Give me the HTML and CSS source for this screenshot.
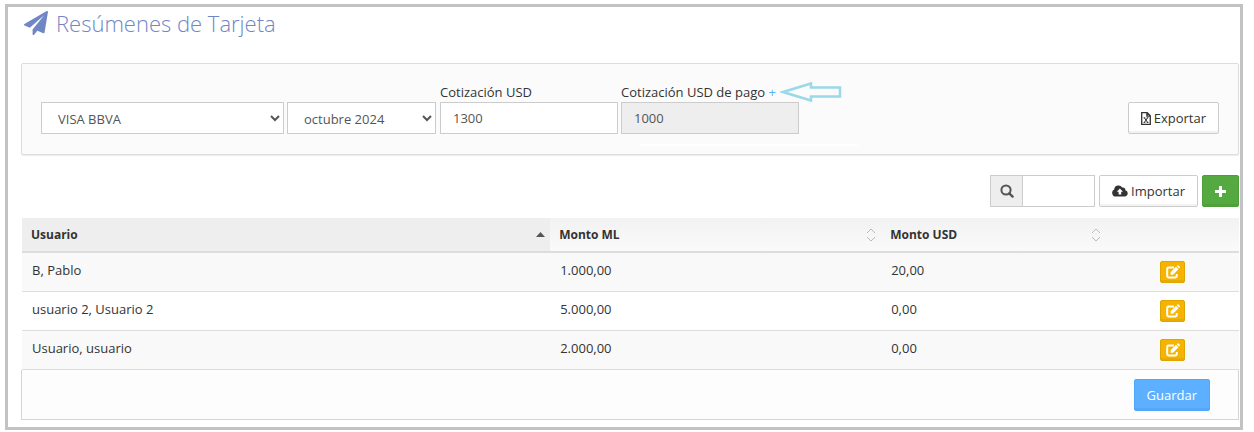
FILE: index.html
```html
<!DOCTYPE html>
<html lang="es">

<head>
    <meta charset="UTF-8">
    <meta name="viewport" content="width=device-width, initial-scale=1.0">
    <title>Resúmenes de Tarjeta</title>
    <link rel="stylesheet" href="styles.css">
</head>

<body>
    <!-- shared icons -->
    <svg class="sprite" aria-hidden="true">
        <symbol id="icon-edit" viewBox="0 0 14 14">
            <path d="M8 2.5H2.6Q1.2 2.5 1.2 3.9V11Q1.2 12.4 2.6 12.4H9.4Q10.8 12.4 10.8 11V9" fill="none" stroke="currentColor" stroke-width="2" />
            <path d="M4.6 9.8V7.2L10 1.8L12.5 4.3L7.1 9.8ZM10.7 1.2L11.5 .4Q12 0 12.5 .4L13.8 1.7Q14.2 2.2 13.8 2.7L13 3.6Z" fill="currentColor" />
        </symbol>
        <symbol id="icon-sort" viewBox="0 0 10 14">
            <path d="M1 5L5 1L9 5M1 9L5 13L9 9" fill="none" stroke="currentColor" />
        </symbol>
    </svg>

    <main class="frame">
        <h1 class="title">
            <svg class="title-icon" viewBox="0 0 1792 1792" aria-hidden="true">
                <path d="M1764 11q33 24 27 64l-256 1536q-5 29-32 45-14 8-31 8-11 0-24-5l-453-185-242 295q-18 23-49 23-13 0-22-4-19-7-30.500-23.500t-11.500-36.500v-349l864-1059-1069 925-395-162q-37-14-40-55-2-40 32-59l1664-960q15-9 32-9 20 0 36 11z" fill="currentColor" />
            </svg>
            Resúmenes de Tarjeta
        </h1>

        <form class="panel">
            <select class="control card-select" aria-label="Tarjeta">
                <option>VISA BBVA</option>
            </select>
            <select class="control month-select" aria-label="Mes">
                <option>octubre 2024</option>
            </select>
            <div class="field">
                <label for="usd">Cotización USD</label>
                <input class="control" type="text" id="usd" value="1300">
            </div>
            <div class="field">
                <div class="field-label">
                    <label for="usdPago">Cotización USD de pago</label>
                    <a class="add-link" href="#">+</a>
                    <svg class="arrow" viewBox="0 0 62 22" aria-hidden="true">
                        <path d="M3 11L31 2.500V6.500H60V15.500H31V19.500Z" fill="none" stroke="currentColor" stroke-width="2.500" />
                    </svg>
                </div>
                <input class="control" type="text" id="usdPago" value="1000" readonly>
            </div>
            <button class="btn export" type="button">
                <svg class="icon-file" viewBox="0 0 10 13" aria-hidden="true">
                    <path d="M.7 .7H6.200L9.300 3.700V12.300H.7ZM5.900 .7V4.100H9.300" fill="none" stroke="currentColor" stroke-width="1.300" />
                    <path d="M3.400 5.800L6.600 10.400M6.600 5.800L3.400 10.400M2.600 10.400H4.300M5.700 10.400H7.400M2.600 5.800H4.300M5.700 5.800H7.400" fill="none" stroke="currentColor" />
                </svg>
                Exportar
            </button>
        </form>

        <div class="toolbar">
            <div class="search">
                <label class="search-addon" for="search" aria-label="Buscar">
                    <svg class="icon-search" viewBox="0 0 14 14" aria-hidden="true">
                        <circle cx="6" cy="6" r="4.600" fill="none" stroke="currentColor" stroke-width="2" />
                        <path d="M9.300 9.300L12.600 12.600" stroke="currentColor" stroke-width="2.400" stroke-linecap="round" />
                    </svg>
                </label>
                <input class="control" type="text" id="search">
            </div>
            <button class="btn" type="button">
                <svg class="icon-cloud" viewBox="0 0 16 12" aria-hidden="true">
                    <path fill-rule="evenodd" d="M3.800 11.500A3.700 3.700 0 0 1 2.200 4.500A4.300 4.300 0 0 1 10.200 2.600A2.300 2.300 0 0 1 13.300 5.200A3.200 3.200 0 0 1 12.700 11.500ZM6.600 9.500H9.200V6.700H11L7.900 3.500L4.800 6.700H6.600Z" fill="currentColor" />
                </svg>
                Importar
            </button>
            <button class="btn btn-green" type="button" aria-label="Agregar">
                <svg class="icon-plus" viewBox="0 0 11 11" aria-hidden="true">
                    <path d="M5.500 0V11M0 5.500H11" stroke="currentColor" stroke-width="3" />
                </svg>
            </button>
        </div>

        <table class="list">
            <thead>
                <tr>
                    <th class="col-user sorted">
                        <div class="head">Usuario
                            <svg class="icon-asc" viewBox="0 0 9 5" aria-hidden="true"><path d="M0 5L4.500 0L9 5Z" fill="currentColor" /></svg>
                        </div>
                    </th>
                    <th class="col-ml">
                        <div class="head">Monto ML <svg class="icon-sort" aria-hidden="true"><use href="#icon-sort" /></svg></div>
                    </th>
                    <th class="col-usd">
                        <div class="head">Monto USD <svg class="icon-sort" aria-hidden="true"><use href="#icon-sort" /></svg></div>
                    </th>
                    <th class="col-actions"></th>
                </tr>
            </thead>
            <tbody>
                <tr>
                    <td>B, Pablo</td>
                    <td>1.000,00</td>
                    <td>20,00</td>
                    <td class="actions"><button class="btn-edit" type="button" aria-label="Editar"><svg class="icon-edit"><use href="#icon-edit" /></svg></button></td>
                </tr>
                <tr>
                    <td>usuario 2, Usuario 2</td>
                    <td>5.000,00</td>
                    <td>0,00</td>
                    <td class="actions"><button class="btn-edit" type="button" aria-label="Editar"><svg class="icon-edit"><use href="#icon-edit" /></svg></button></td>
                </tr>
                <tr>
                    <td>Usuario, usuario</td>
                    <td>2.000,00</td>
                    <td>0,00</td>
                    <td class="actions"><button class="btn-edit" type="button" aria-label="Editar"><svg class="icon-edit"><use href="#icon-edit" /></svg></button></td>
                </tr>
            </tbody>
        </table>

        <div class="footer">
            <button class="btn btn-blue" type="button">Guardar</button>
        </div>
    </main>
</body>

</html>
```

FILE: styles.css
```css
* {
    box-sizing: border-box;
}

body {
    margin: 4px 11px 2px 5px;
    background-color: #fff;
    color: #333;
    font-family: "Open Sans", sans-serif;
    font-size: 13px;
    line-height: 18px;
}

.sprite {
    position: absolute;
    width: 0;
    height: 0;
}

.frame {
    border: 3px solid #c2c2c2;
    padding: 0 1px 7px 13px;
}

.title {
    display: flex;
    align-items: center;
    gap: 8px;
    height: 32px;
    margin: 0 0 24px 3px;
    color: #6f87c4;
    font-size: 22px;
    font-weight: 300;
}

.title-icon {
    width: 24px;
    height: 24px;
}

.panel {
    position: relative;
    display: flex;
    align-items: flex-end;
    gap: 3px;
    padding: 19px 19px 20px;
    border: 1px solid #ddd;
    border-radius: 2px;
    background-color: #fbfbfb;
    box-shadow: 0 1px 1px #ececec;
}

/* thin highlight under the quote fields */
.panel::after {
    content: "";
    position: absolute;
    left: 618px;
    bottom: 8px;
    width: 218px;
    height: 2px;
    background-color: #fff;
}

.control {
    height: 32px;
    padding: 0 12px;
    border: 1px solid #ccc;
    border-radius: 0;
    background-color: #fff;
    color: #555;
    font: inherit;
}

.control[readonly] {
    background-color: #eee;
}

select.control {
    padding: 2px 0 0 12px;
}

.card-select {
    width: 243px;
}

.month-select {
    width: 149px;
    margin-right: 1px;
}

.field {
    display: flex;
    flex-direction: column;
    gap: 1px;
    width: 178px;
}

.field-label {
    position: relative;
    white-space: nowrap;
}

.add-link {
    color: #57aef9;
    text-decoration: none;
}

.arrow {
    position: absolute;
    top: -2px;
    left: 159px;
    width: 62px;
    height: 22px;
    color: #99d9ea;
}

.btn {
    display: flex;
    align-items: center;
    justify-content: center;
    gap: 3px;
    height: 32px;
    padding: 0 12px;
    border: 1px solid #ccc;
    border-radius: 2px;
    background-color: #fff;
    box-shadow: inset 0 -2px 0 rgba(0, 0, 0, 0.05);
    color: #333;
    font: inherit;
}

.export {
    margin-left: auto;
}

.icon-file {
    width: 10px;
    height: 13px;
}

.toolbar {
    display: flex;
    justify-content: flex-end;
    gap: 4px;
    margin: 20px 0 11px;
}

.search {
    display: flex;
}

.search .control {
    width: 73px;
}

.search-addon {
    display: flex;
    align-items: center;
    justify-content: center;
    width: 32px;
    border: 1px solid #ccc;
    border-right: none;
    background-color: #eee;
    color: #555;
}

.icon-search {
    width: 14px;
    height: 14px;
}

.icon-cloud {
    width: 16px;
    height: 12px;
}

.icon-plus {
    width: 11px;
    height: 11px;
}

.btn-green {
    border-color: #4e9f3a;
    background-color: #55a941;
    color: #fff;
}

.list {
    width: calc(100% - 1px);
    margin-left: 1px;
    border-collapse: separate;
    border-spacing: 0;
    table-layout: fixed;
}

.list th {
    height: 35px;
    padding: 0 9px;
    border-bottom: 2px solid #ddd;
    background-image: linear-gradient(#f2f2f2, #fafafa);
    font-size: 12px;
    text-align: left;
}

.list .sorted {
    padding-right: 5px;
    background: #eee;
}

.head {
    display: flex;
    align-items: center;
    justify-content: space-between;
}

.icon-asc {
    width: 9px;
    height: 5px;
    color: #555;
}

.icon-sort {
    width: 10px;
    height: 14px;
    margin-right: -4px;
    color: #bbb;
}

.col-user {
    width: 43.4%;
}

.col-ml {
    width: 27.2%;
}

.col-usd {
    width: 18.5%;
}

.list td {
    height: 39px;
    padding: 8px 10px 0;
    border-bottom: 1px solid #ddd;
    vertical-align: top;
}

.list tbody tr:nth-child(odd) {
    background-color: #f9f9f9;
}

.list .actions {
    padding: 0;
    text-align: center;
    vertical-align: middle;
}

.btn-edit {
    display: inline-flex;
    align-items: center;
    justify-content: center;
    width: 25px;
    height: 22px;
    padding: 0;
    border: 1px solid #dfa500;
    border-radius: 2px;
    background-color: #f6b400;
    box-shadow: inset 0 -2px 0 rgba(0, 0, 0, 0.05);
    color: #fff;
    vertical-align: middle;
}

.icon-edit {
    width: 14px;
    height: 14px;
}

.footer {
    display: flex;
    justify-content: flex-end;
    padding: 9px 28px 8px;
    border: 1px solid #d5d5d5;
    border-top: none;
    background-color: #fdfdfd;
}

.btn-blue {
    border-color: #4fa8fb;
    background-color: #5cb0ff;
    color: #fff;
}
```
